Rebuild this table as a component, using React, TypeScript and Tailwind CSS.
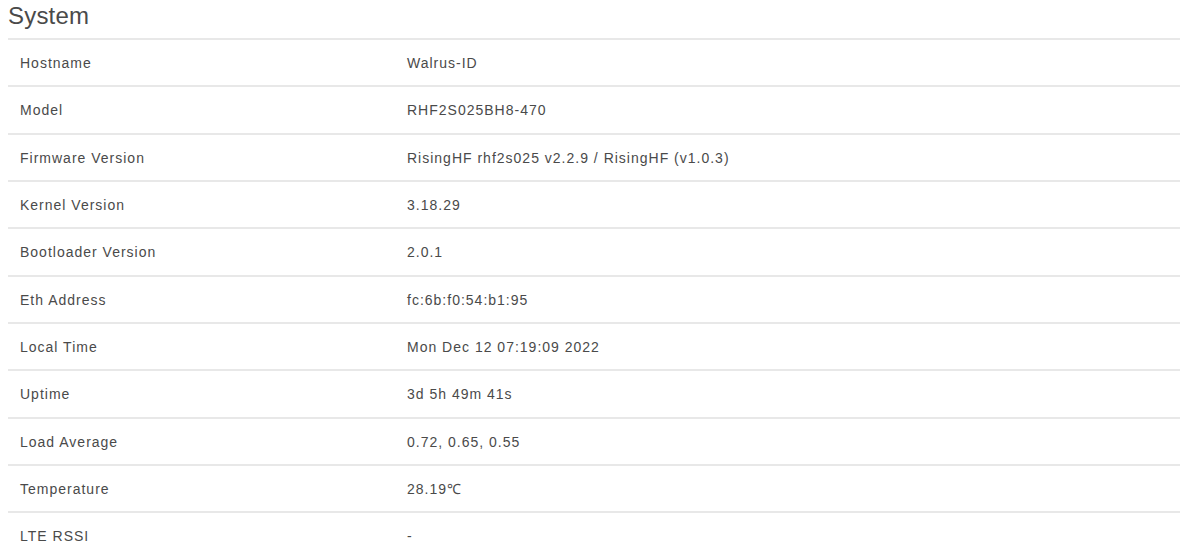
const rows = [
  ["Hostname", "Walrus-ID"],
  ["Model", "RHF2S025BH8-470"],
  ["Firmware Version", "RisingHF rhf2s025 v2.2.9 / RisingHF (v1.0.3)"],
  ["Kernel Version", "3.18.29"],
  ["Bootloader Version", "2.0.1"],
  ["Eth Address", "fc:6b:f0:54:b1:95"],
  ["Local Time", "Mon Dec 12 07:19:09 2022"],
  ["Uptime", "3d 5h 49m 41s"],
  ["Load Average", "0.72, 0.65, 0.55"],
  ["Temperature", "28.19℃"],
  ["LTE RSSI", "-"],
];

export default function App() {
  return (
    <div className="h-[548px] overflow-hidden bg-white pl-2 text-[#4a4a4a] font-[Liberation_Sans,Arial,sans-serif]">
      <h2 className="h-[38px] pt-[1px] text-[24px] leading-[30px] tracking-[0.2px]">System</h2>
      <div>
        {rows.map(([label, value]) => (
          <div
            key={label}
            className="flex h-[47.33px] items-center border-t-2 border-[#e8e8e8] pt-[2px] text-[14px] tracking-[1px]"
          >
            <div className="w-[387px] shrink-0 px-3">{label}</div>
            <div className="px-3">{value}</div>
          </div>
        ))}
      </div>
    </div>
  );
}
